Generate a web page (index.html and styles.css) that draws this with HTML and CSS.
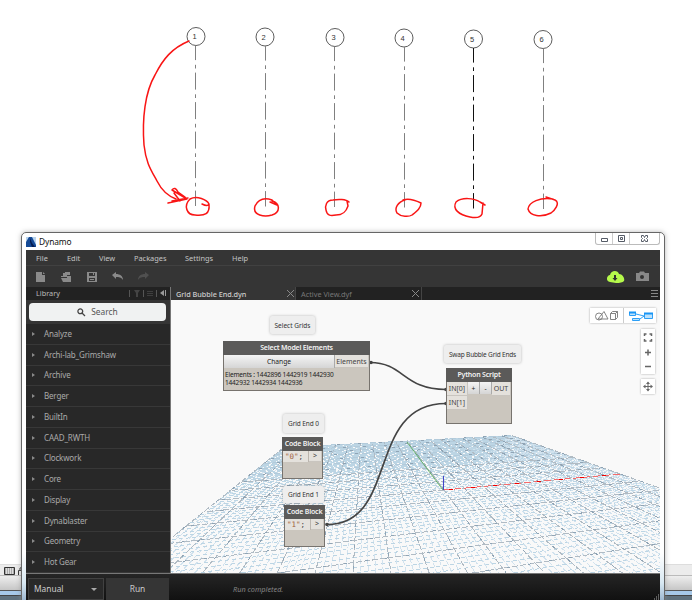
FILE: index.html
```html
<!DOCTYPE html>
<html lang="en">
<head>
<meta charset="utf-8">
<title>Dynamo</title>
<link rel="stylesheet" href="styles.css">
</head>
<body>
<svg class="drawing" width="692" height="232" viewBox="0 0 692 232">
  <g id="gridlines"></g>
  <g class="ink">
    <path d="M189 41C172 48 163 59 155 75C145 92 142 119 144 145C146 163 151 170 157 181C162 191 168 196 176 199"/>
    <path d="M168 203L187 199L172 190Q175 186 178 192L185 197M174 193L180 201M172 201L188 198"/>
    <path d="M202 204Q208 207 209 204C207 200 197 195 190 199C183 206 187 215 195 215C205 216 210 214 209 204"/>
    <path d="M270 202L277 205L272 200Q260 196 255 206C252 216 265 217 272 215C281 212 280 203 272 201"/>
    <path d="M349 202C346 199 338 199 333 200C326 200 325 206 326 210C327 216 331 216 336 215C343 215 346 212 348 206L347 201"/>
    <path d="M405 200C398 202 394 208 397 213C401 217 409 217 412 215C417 211 421 208 421 203C415 200 408 198 403 200"/>
    <path d="M485 205L480 202C474 198 462 197 456 202C452 209 459 215 470 217Q480 219 482 214L483 203"/>
    <path d="M546 197L555 200C561 203 554 211 551 213C541 218 530 216 528 209C529 202 540 197 553 199"/>
  </g>
</svg>

<div class="host-bars">
  <div class="view-bar"><svg width="24" height="12" viewBox="0 0 24 12"><path d="M4.500 2.500h10v7h-10z" fill="#ddd" stroke="#333"/><path d="M5 4h9M5 6h9M5 8h9" stroke="#777" stroke-dasharray="1 1"/><path d="M18.500 5.500h5v5h-5zM20 5V3l3-1" fill="none" stroke="#333"/></svg></div>
  <div class="status-bar"></div>
  <div class="host-edge"></div>
  <div class="host-base"></div>
</div>

<div class="window">
  <header class="titlebar">
    <svg class="logo" width="10" height="10" viewBox="0 0 10 10"><path fill="#b8d4ee" d="M0 0h10v10H0z"/><path fill="#164a96" d="M0 10V5L3 0h3l4 8v2z"/><path fill="#061d50" d="M4 1l2 5 3 4H6L4 5z"/></svg>
    <span class="title">Dynamo</span>
    <div class="controls">
      <i><svg width="9" height="9"><path d="M1.500 4.500h6v3h-6z"/></svg></i>
      <i><svg width="9" height="9"><path d="M1.500 1.500h6v6h-6zM3.500 3.500h2v2h-2z"/></svg></i>
      <i class="wide"><svg width="9" height="9"><path d="M1.500 1.500h2l1 2 1-2h2v2l-1 1 1 1v2h-2l-1-2-1 2h-2v-2l1-1-1-1z"/></svg></i>
    </div>
  </header>
  <main class="app">
    <nav class="menu"><span class="m1">File</span><span class="m2">Edit</span><span class="m3">View</span><span class="m4">Packages</span><span class="m5">Settings</span><span class="m6">Help</span></nav>
    <div class="toolbar">
      <svg width="125" height="21" viewBox="26 266 125 21"><g fill="#8a8a8a"><path d="M36 272h6v3h3v7h-9zM43 272l2 2h-2z"/><path d="M61 276h2v-3h2v-1h5v3h-3v1h4v6h-8l-2-4h6v-1h-6z"/><path fill-rule="evenodd" d="M87 272h10v10H87zM89 273v3h6v-3zM89 278v3h6v-3z"/><path d="M93 273h1v2h-1zM90 279h4v1h-4z"/><path d="M112 275l4-3v2c4 0 7 2 7 6c-2-3-4-3-7-3v2z"/></g><path fill="#505050" d="M149 275l-4-3v2c-4 0-7 2-7 6c2-3 4-3 7-3v2z"/></svg>
      <svg class="right-tools" width="44" height="14" viewBox="606 270 44 14"><path fill="#b5f94b" d="M610 282C605 281 607 275 610 275C611 270 618 270 619 274C623 274 625 279 624 281Q622 283 616 283z"/><path fill="#303030" d="M614 275h2v3h1.500L615 281l-2.500-3h1.500z"/><path fill="#888" d="M636 273h3l1-1.500h4l1 1.500h4v8h-13z"/><circle cx="642" cy="277" r="2" fill="#333"/></svg>
    </div>
    <div class="content">
      <aside class="library">
        <div class="lib-head"><span>Library</span><svg width="42" height="12" viewBox="128 287 42 12"><path d="M129.500 290v7M143.500 290v7M156.500 290v7" stroke="#555"/><path d="M134 290h6l-2 3v4h-2v-4z" fill="#444"/><path d="M147 291.500h6M147 293.500h6M147 295.500h6" stroke="#3e3e3e"/><path d="M164 290v6l-4-3zM165 290h1v6h-1z" fill="#999"/></svg></div>
        <div class="search"><svg width="9" height="9" viewBox="0 0 9 9"><circle cx="3.300" cy="3.300" r="2.400"/><path d="M5 5l3 3"/></svg><span>Search</span></div>
        <ul class="list"><li>Analyze</li><li>Archi-lab_Grimshaw</li><li>Archive</li><li>Berger</li><li>BuiltIn</li><li>CAAD_RWTH</li><li>Clockwork</li><li>Core</li><li>Display</li><li>Dynablaster</li><li>Geometry</li><li>Hot Gear</li></ul>
      </aside>
      <section class="workspace">
        <div class="tabs"><div class="tab active"><span>Grid Bubble End.dyn</span><b></b></div><div class="tab"><span>Active View.dyf</span><b></b></div><svg width="7" height="8"><path d="M0 .5h7M0 3.500h7M0 6.500h7" stroke="#888"/></svg></div>
        <div class="canvas">
          <svg class="floor" width="489" height="273" viewBox="171 300 489 273"><g id="floor"></g><path class="axis-x" d="M444 490L620 474"/><path class="axis-x bright" d="M444 490L620 474"/><path class="axis-y" d="M407 442L443 490"/><path class="axis-z" d="M443.500 476V490"/></svg>
          <svg class="floor" width="489" height="273" viewBox="171 300 489 273"><g class="wire"><path d="M370 362.500C404 362.500 403 389.500 446 389.500"/><path d="M327 524.500C399 524.500 366 403.500 446 403.500"/></g><g fill="#444"><circle cx="371" cy="362.500" r="1.800"/><circle cx="327" cy="524.500" r="1.800"/><circle cx="446" cy="389.500" r="1.800"/><circle cx="446" cy="403.500" r="1.800"/></g></svg>
          <div class="note n-select">Select Grids</div>
          <div class="note n-swap">Swap Bubble Grid Ends</div>
          <div class="note n-end0">Grid End 0</div>
          <div class="note n-end1">Grid End 1</div>
          <div class="node select"><h3>Select Model Elements</h3><div class="row"><button>Change</button><span class="port">Elements</span></div><p>Elements : 1442896 1442919 1442930<br>1442932 1442934 1442936</p></div>
          <div class="node python"><h3>Python Script</h3><div class="row"><div class="ins"><span class="port">IN[0]</span><span class="port">IN[1]</span></div><button>+</button><button>-</button><span class="port out">OUT</span></div></div>
          <div class="node code c0"><h3>Code Block</h3><div class="row"><code><em>"0"</em>;</code><span class="port">&gt;</span></div></div>
          <div class="node code c1"><h3>Code Block</h3><div class="row"><code><em>"1"</em>;</code><span class="port">&gt;</span></div></div>
          <div class="modes"><svg width="66" height="15" viewBox="589 307 66 15"><g fill="none" stroke="#777" stroke-width=".9"><circle cx="598" cy="315.500" r="3.500"/><path d="M597 318l6-7.500 4 7.500zM609.500 312.500h5v6h-5zM609.500 312.500l2-2h5v6l-2 2M614.500 312.500l2-2"/></g><path d="M622.500 307v15" stroke="#ccc"/><g fill="#bde2fc" stroke="#1895f5" stroke-width=".9"><path d="M628.500 311.500h6v3h-6zM631.500 317.500h7v2h-7zM643.500 312.500h8v5h-8z"/><path fill="none" d="M635 313l4 1 4 1M639 318l4-3"/><path d="M628 311.500h7M643 312.500h9" stroke-width="1.800"/></g></svg></div>
          <div class="zooms"><svg width="14" height="45" viewBox="641 329 14 45"><g fill="none" stroke="#666" stroke-width="1.500"><path d="M644.500 336v-2h2M649.500 334h2v2M651.500 339v2h-2M646.500 341h-2v-2M645 352.500h6M648 349.500v6M645 366.500h6"/></g></svg></div>
          <div class="pan"><svg width="14" height="15" viewBox="641 379 14 15"><path d="M648 382.500v8M644 386.500h8" stroke="#666"/><path fill="#666" d="M648 381.500l2 2.500h-4zM648 391.500l2-2.500h-4zM643 386.500l2.500-2v4zM653 386.500l-2.500-2v4z"/></svg></div>
        </div>
      </section>
    </div>
    <footer class="runbar"><div class="mode"><span>Manual</span><i></i></div><div class="run">Run</div><span class="status">Run completed.</span><svg width="6" height="6"><path d="M4 1h1M2 3h1M4 3h1M0 5h1M2 5h1M4 5h1" stroke="#aaa"/></svg></footer>
  </main>
</div>
<script src="scene.js"></script>
</body>
</html>
```
FILE: styles.css
```css
* { box-sizing: border-box; }
body { margin: 0; width: 692px; height: 600px; overflow: hidden; position: relative; background: #fff; font-family: "Noto Sans", sans-serif; }
svg { display: block; flex: none; }
.drawing { position: absolute; left: 0; top: 0; }
.drawing text { font: 7.5px "Liberation Sans", sans-serif; fill: #333; text-anchor: middle; }
.ink path { fill: none; stroke: #f91515; stroke-width: 1.5; stroke-linejoin: round; stroke-linecap: round; }
.host-bars { position: absolute; left: 0; right: 0; bottom: 0; height: 36px; display: flex; flex-direction: column; }
.view-bar { height: 11px; background: #ececec; border-top: 1px solid #ddd; }
.status-bar { height: 15px; border-top: 1px solid #bbb; background: linear-gradient(#eee, #c6c6c6); }
.host-edge { height: 6px; background: #a6c8e8; border-top: 1px solid #555; border-bottom: 1px solid #444; }
.host-base { flex: 1; background: #60717d; }
.window { position: absolute; left: 21px; top: 232px; width: 644px; height: 376px; border: 1px solid #666; border-radius: 5px 5px 0 0; background: linear-gradient(#fff 0 320px, #d8e8f2 350px, #86a5c4); box-shadow: 0 0 5px #8889; padding: 0 4px; }
.titlebar { height: 17px; display: flex; align-items: center; font: 8.4px/16px "Noto Sans", sans-serif; color: #111; }
.logo { margin-right: 3px; }
.title { flex: 1; letter-spacing: -.1px; }
.controls { display: flex; height: 12px; align-self: flex-start; border: 1px solid #bbb; border-top: 0; border-radius: 0 0 3px 3px; }
.controls i { width: 17px; display: flex; align-items: center; justify-content: center; border-right: 1px solid #ccc; }
.controls .wide { width: 29px; border: 0; }
.controls path { fill: #fff; stroke: #555b66; }
.app { width: 634px; height: 350px; background: #353535; color: #bbb; display: flex; flex-direction: column; overflow: hidden; }
.menu { height: 16px; flex: none; border-bottom: 1px solid #414141; display: flex; font-size: 7.4px; line-height: 17px; color: #c4c4c4; padding-left: 10px; }
.m1 { width: 31px; } .m2 { width: 32px; } .m3 { width: 35px; } .m4 { width: 51px; } .m5 { width: 47px; }
.toolbar { height: 21px; flex: none; display: flex; justify-content: space-between; align-items: center; }
.right-tools { margin-right: 10px; }
.content { display: flex; flex: 1; height: 286px; }
.library { width: 145px; flex: none; background: #353535; border-right: 1px solid #777; }
.lib-head { height: 13px; background: #222; display: flex; justify-content: space-between; padding-left: 10px; font-size: 7.3px; line-height: 13px; }
.search { margin: 3px 3px 3px; width: 137px; height: 18px; border-radius: 4px; background: #f0f2f2; color: #555; font-size: 8.4px; display: flex; align-items: center; justify-content: center; gap: 5px; line-height: 18px; }
.search svg { fill: none; stroke: #444; stroke-width: 1.3; }
.list { list-style: none; margin: 0; padding: 0; }
.list li { height: 20.75px; background: #282828; border-bottom: 1px solid #383838; font-size: 8px; letter-spacing: -.17px; line-height: 20px; color: #aaa; display: flex; align-items: center; }
.list li::before { content: ""; border-left: 3.500px solid #8a8a8a; border-top: 2px solid transparent; border-bottom: 2px solid transparent; margin: 0 9px 0 6px; }
.workspace { flex: 1; min-width: 0; }
.tabs { height: 13px; display: flex; background: #222; line-height: 12px; align-items: stretch; }
.tab { width: 126px; display: flex; justify-content: space-between; align-items: center; padding: 0 2px 0 5px; color: #777; border-right: 1px solid #444; font-size: 7.300px; }
.tab.active { width: 125px; padding-right: 1px; background: #353535; color: #ccc; font-weight: 500; letter-spacing: -.05px; }
.tab b { width: 7px; height: 7px; background: linear-gradient(45deg, transparent 44%, #888 45% 55%, transparent 56%), linear-gradient(-45deg, transparent 44%, #888 45% 55%, transparent 56%); }
.tabs > svg { margin: 3px 2px 0 auto; }
.canvas { position: relative; height: 273px; background: #f9f9f9; overflow: hidden; }
.floor { position: absolute; left: 0; top: 0; }
.floor path { fill: none; }
.minor-u { stroke: #d1e2ee; stroke-dasharray: 5 2; shape-rendering: crispEdges; }
.minor-v { stroke: #bcd5e4; stroke-dasharray: 4 3; shape-rendering: crispEdges; }
.major { stroke: #b0bbc4; stroke-dasharray: 6 2; shape-rendering: crispEdges; }
.minor-v.far { stroke-dasharray: 7 2; }
.major.far { stroke: #b3cbdb; }
.accent { stroke: #8fa4b5; stroke-dasharray: 3 18; shape-rendering: crispEdges; }
.axis-x { stroke: #f46c6c; stroke-dasharray: 7 3; shape-rendering: crispEdges; }
.axis-x.bright { stroke: #e00; stroke-dasharray: 4 18; stroke-dashoffset: -5; }
.axis-y { stroke: #48a348; stroke-width: .8; }
.axis-z { stroke: #4444c8; }
.wire path { stroke: #444; stroke-width: 1.700; }
.note { position: absolute; background: #eee; border-radius: 2px; box-shadow: 0 0 3px #0004; color: #333; font-size: 6.500px; display: flex; align-items: center; justify-content: center; white-space: nowrap; }
.n-select { left: 99px; top: 16px; width: 45px; height: 18px; }
.n-swap { left: 273px; top: 45px; width: 77px; height: 18px; letter-spacing: -.2px; }
.n-swap { letter-spacing: -.18px; }
.n-end0 { left: 112px; top: 114px; width: 41px; height: 19px; letter-spacing: -.1px; }
.n-end1 { left: 112px; top: 186px; width: 41px; height: 17px; letter-spacing: -.1px; }
.node { position: absolute; background: #cbc6be; border: 1px solid #77736e; border-top: 0; color: #444; font-size: 7px; }
.node h3 { margin: 0 -1px; height: 14px; background: #5b5a59; color: #f3f3f3; font-size: 7px; font-weight: 600; letter-spacing: -.2px; line-height: 13px; text-align: center; white-space: nowrap; }
.row { display: flex; }
.port { background: #e4e1dc; height: 13px; line-height: 13px; text-align: center; border-right: 1px solid #c9c5bf; border-bottom: 1px solid #c9c5bf; }
.node button { padding: 0; border: 0; border-right: 1px solid #aaa; background: linear-gradient(#f4f4f4, #d5d5d5); font: 6.700px/13px "Noto Sans", sans-serif; color: #222; }
.select { left: 52px; top: 41px; width: 147px; height: 50px; }
.select button { width: 111px; }
.select .port { flex: 1; }
.select p { margin: 3px 0 0 1px; font-size: 6.500px; letter-spacing: -.18px; line-height: 8px; color: #222; white-space: nowrap; }
.python { left: 275px; top: 68px; width: 66px; height: 56px; }
.ins { width: 21px; }
.ins .port { display: block; height: 14px; }
.python button { width: 12px; height: 12px; }
.python .out { flex: 1; height: 14px; }
.code { width: 41px; height: 42px; }
.c0 { left: 111px; top: 137px; }
.c1 { left: 113px; top: 205px; }
.code code { width: 26px; height: 11px; background: #e4e1dc; font: 7.500px/12px "DejaVu Sans Mono", monospace; padding-left: 2px; border-right: 1px solid #bbb5ae; }
.code em { color: #a0603c; font-style: normal; }
.code .port { flex: 1; height: 11px; line-height: 10px; }
.modes, .zooms, .pan { position: absolute; background: #fff; box-shadow: 0 0 2px #0005; }
.modes { left: 419px; top: 8px; }
.zooms { left: 470px; top: 29px; }
.pan { left: 470px; top: 79px; }
.runbar { height: 27px; flex: none; background: linear-gradient(#252525, #111); border-top: 1px solid #777; display: flex; padding-top: 4px; gap: 2px; color: #ccc; font-size: 8.400px; line-height: 22px; }
.mode { width: 76px; margin-left: 2px; background: #292929; border: 1px solid #414141; display: flex; align-items: center; justify-content: space-between; padding: 0 6px 0 5px; }
.mode i { border-top: 3px solid #aaa; border-left: 3px solid transparent; border-right: 3px solid transparent; }
.run { width: 63px; background: #353535; text-align: center; }
.status { margin-left: 62px; font-size: 7.300px; font-style: italic; color: #858585; flex: 1; }
.runbar > svg { align-self: flex-end; }
```
FILE: scene.js
```js
const NS = "http://www.w3.org/2000/svg";
function add(parent, name, attrs, text) {
  const el = document.createElementNS(NS, name);
  for (const key in attrs) el.setAttribute(key, attrs[key]);
  if (text) el.textContent = text;
  parent.appendChild(el);
}

// Numbered grid bubbles with their dash-dot centre lines.
const grids = document.getElementById("gridlines");
[[196, 36.500, 195.500], [265, 37, 265.500], [335, 37.500, 334.500], [404, 38, 404.500], [473.500, 39, 473.500], [543, 39.500, 543.500]].forEach(([cx, cy, x], i) => {
  const stroke = i === 4 ? "#111" : "#808080";
  add(grids, "circle", { cx, cy, r: 9, fill: "#fff", stroke: "#333", "stroke-width": 0.8 });
  add(grids, "text", { x: cx - 1.500, y: cy + 2.500 }, String(i + 1));
  add(grids, "path", { d: `M${x} ${cy + 9}V${cy + 169.500}`, stroke, fill: "none", "stroke-dasharray": "17 4.700 3.700 4.100", "stroke-dashoffset": 2.400 });
});

// Ground plane: u and v run from -1 to 1 and are projected to the screen.
const floor = document.getElementById("floor");
const A = 0.154, B = 0.845;
function project(u, v) {
  const w = 1 + A * u + B * v;
  return [(444 + 1764 * A * u + 364 * B * v) / w, (490 + 370 * A * u + 383 * B * v) / w].map(n => n.toFixed(1)).join(" ");
}
for (const pass of ["minor", "major"]) {
  for (let i = -50; i <= 50; i++) {
    const t = i / 50, major = i % 5 === 0;
    if (major !== (pass === "major")) continue;
    const far = t > 0.3 ? " far" : "";
    const across = `M${project(-1, t)}L${project(1, t)}`;
    const along = `M${project(t, 1)}L${project(t, -0.7)}`;
    const offset = (i + 50) * 7 % 23;
    if (t > -0.7) add(floor, "path", { d: across, class: (major ? "major" : "minor-v") + far, "stroke-dashoffset": offset });
    add(floor, "path", { d: along, class: major ? "major" : "minor-u", "stroke-dashoffset": offset });
    if (major) {
      if (t > -0.7) add(floor, "path", { d: across, class: "accent", "stroke-dashoffset": offset });
      add(floor, "path", { d: along, class: "accent", "stroke-dashoffset": offset });
    }
  }
}
```
